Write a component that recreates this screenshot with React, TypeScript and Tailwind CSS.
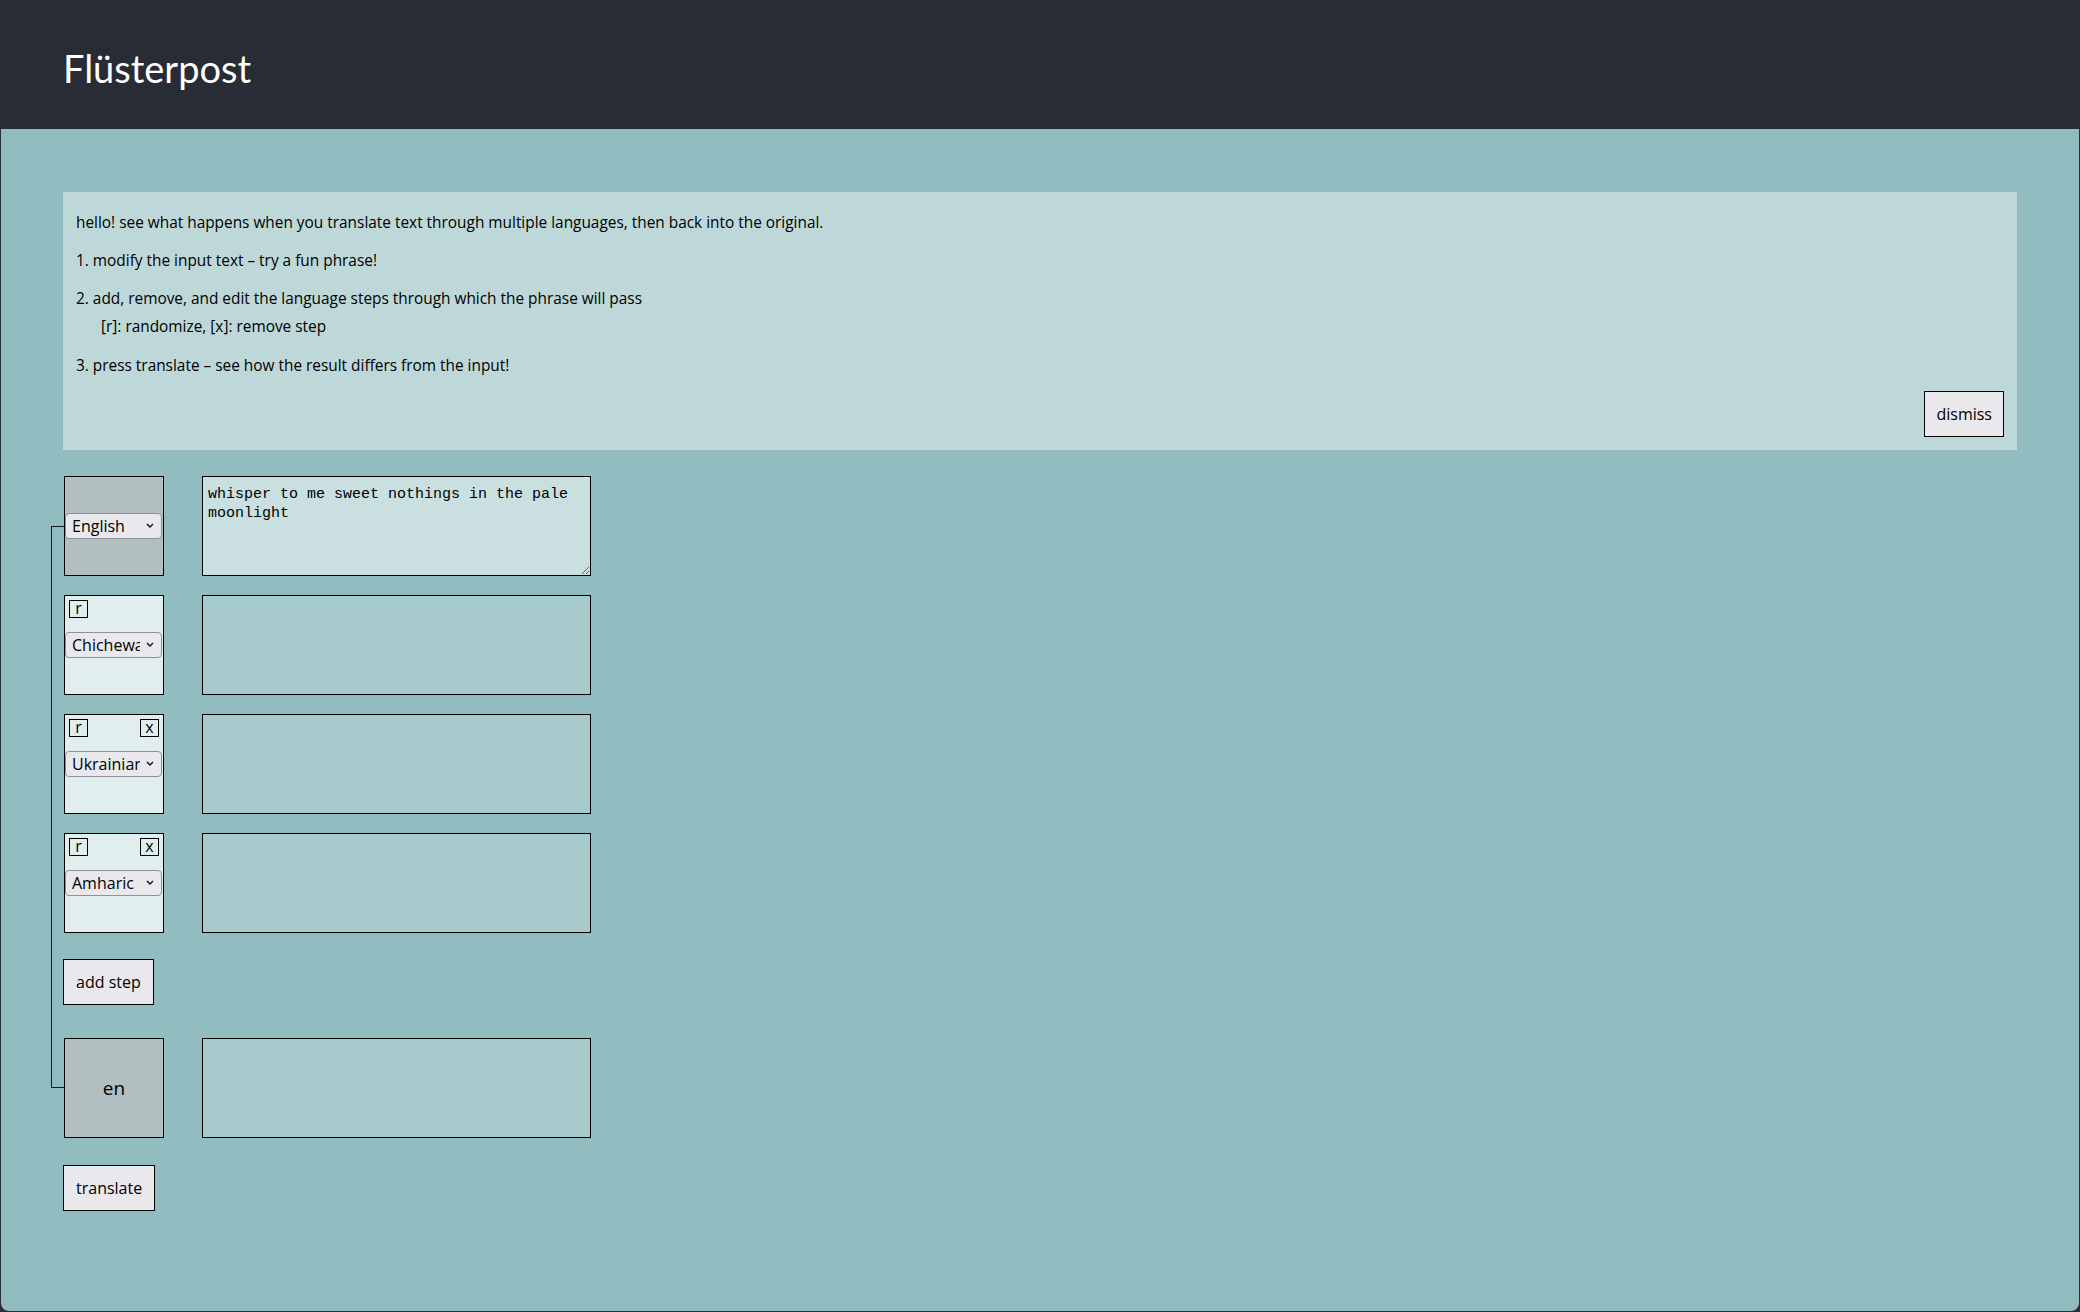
import { useState } from 'react';

const STEPS = [
  { id: 1, lang: 'Chichewa', removable: false },
  { id: 2, lang: 'Ukrainian', removable: true },
  { id: 3, lang: 'Amharic', removable: true },
];

const LANGS = ['English', 'Chichewa', 'Ukrainian', 'Amharic', 'German', 'Japanese'];

function LangSelect({ value }: { value: string }) {
  return (
    <div className="relative w-[97px]">
      <select
        defaultValue={value}
        className="w-full h-[26px] appearance-none bg-[#e9e9ed] border border-[#8f8f9d] rounded-[4px] pl-[6px] pr-[21px] text-[16px] leading-[24px] text-black"
      >
        {LANGS.map((l) => (
          <option key={l}>{l}</option>
        ))}
      </select>
      <svg
        className="pointer-events-none absolute right-[8px] top-[10px] w-[8px] h-[6px]"
        viewBox="0 0 8 6"
        fill="none"
        stroke="#111"
        strokeWidth={1.4}
      >
        <path d="M1 1l3 3 3-3" />
      </svg>
    </div>
  );
}

function SmallBtn({ label }: { label: string }) {
  return (
    <button className="w-[19px] h-[18px] border border-black flex items-center justify-center text-[16px] leading-none text-black pb-[2px]">
      {label}
    </button>
  );
}

export default function App() {
  const [showHelp, setShowHelp] = useState(true);
  const [input, setInput] = useState('whisper to me sweet nothings in the pale moonlight');

  return (
    <div className="h-[1312px] w-full bg-[#2c2f35] flex flex-col font-['Open_Sans','Noto_Sans',sans-serif] text-black">
      {/* 헤더 */}
      <header className="h-[129px] bg-[#282c34] flex items-center pl-[63px] pt-[6px] shrink-0">
        <h1 className="text-[38px] text-white leading-none font-['Lato',sans-serif]">Flüsterpost</h1>
      </header>

      <main className="flex-1 bg-[#92bdc0] mx-px mb-px rounded-b-[8px] px-[62px] pt-[63px]">
        {/* 안내 상자 */}
        {showHelp && (
          <div className="bg-[#bed8d9] px-[13px] pt-[13px] pb-[13px] text-[15.4px] leading-[21px] flex flex-col">
            <p className="mt-[7px]">
              hello! see what happens when you translate text through multiple languages, then back into the original.
            </p>
            <p className="mt-[17px]">1. modify the input text – try a fun phrase!</p>
            <p className="mt-[17px]">2. add, remove, and edit the language steps through which the phrase will pass</p>
            <p className="mt-[7px] pl-[25px]">[r]: randomize, [x]: remove step</p>
            <p className="mt-[18px]">3. press translate – see how the result differs from the input!</p>
            <div className="flex justify-end mt-[15px]">
              <button
                onClick={() => setShowHelp(false)}
                className="h-[46px] px-[11px] bg-[#e9e9ed] border border-black text-[16px]"
              >
                dismiss
              </button>
            </div>
          </div>
        )}

        {/* 번역 단계 */}
        <div className="relative mt-[26px] flex flex-col pl-px">
          {/* 연결선 */}
          <div className="absolute left-[-12px] top-[50px] bottom-[50px] w-[14px] border-l border-t border-b border-[#1a1a1a]" />

          <div className="flex gap-[38px]">
            <div className="w-[100px] h-[100px] bg-[#b1bfc0] border border-black flex items-center">
              <LangSelect value="English" />
            </div>
            <textarea
              value={input}
              onChange={(e) => setInput(e.target.value)}
              className="w-[389px] h-[100px] bg-[#c9dfe0] border border-black px-[5px] py-[8px] font-['Liberation_Mono',monospace] text-[15px] leading-[19px] text-black"
            />
          </div>

          {STEPS.map((s) => (
            <div key={s.id} className="flex gap-[38px] mt-[19px]">
              <div className="w-[100px] h-[100px] bg-[#e1eeee] border border-black flex flex-col">
                <div className="flex justify-between px-[4px] pt-[4px]">
                  <SmallBtn label="r" />
                  {s.removable && <SmallBtn label="x" />}
                </div>
                <div className="mt-[14px]">
                  <LangSelect value={s.lang} />
                </div>
              </div>
              <textarea readOnly className="w-[389px] h-[100px] bg-[#a7cacc] border border-black resize-none" />
            </div>
          ))}

          <div className="mt-[26px] mb-[33px] ml-[-1px]">
            <button className="h-[46px] px-[12px] bg-[#e9e9ed] border border-black text-[16px]">add step</button>
          </div>

          <div className="flex gap-[38px]">
            <div className="w-[100px] h-[100px] bg-[#b1bfc0] border border-black flex items-center justify-center text-[19px]">
              en
            </div>
            <textarea readOnly className="w-[389px] h-[100px] bg-[#a7cacc] border border-black resize-none" />
          </div>
        </div>

        <div className="mt-[27px]">
          <button className="h-[46px] px-[12px] bg-[#e9e9ed] border border-black text-[16px]">translate</button>
        </div>
      </main>
    </div>
  );
}
